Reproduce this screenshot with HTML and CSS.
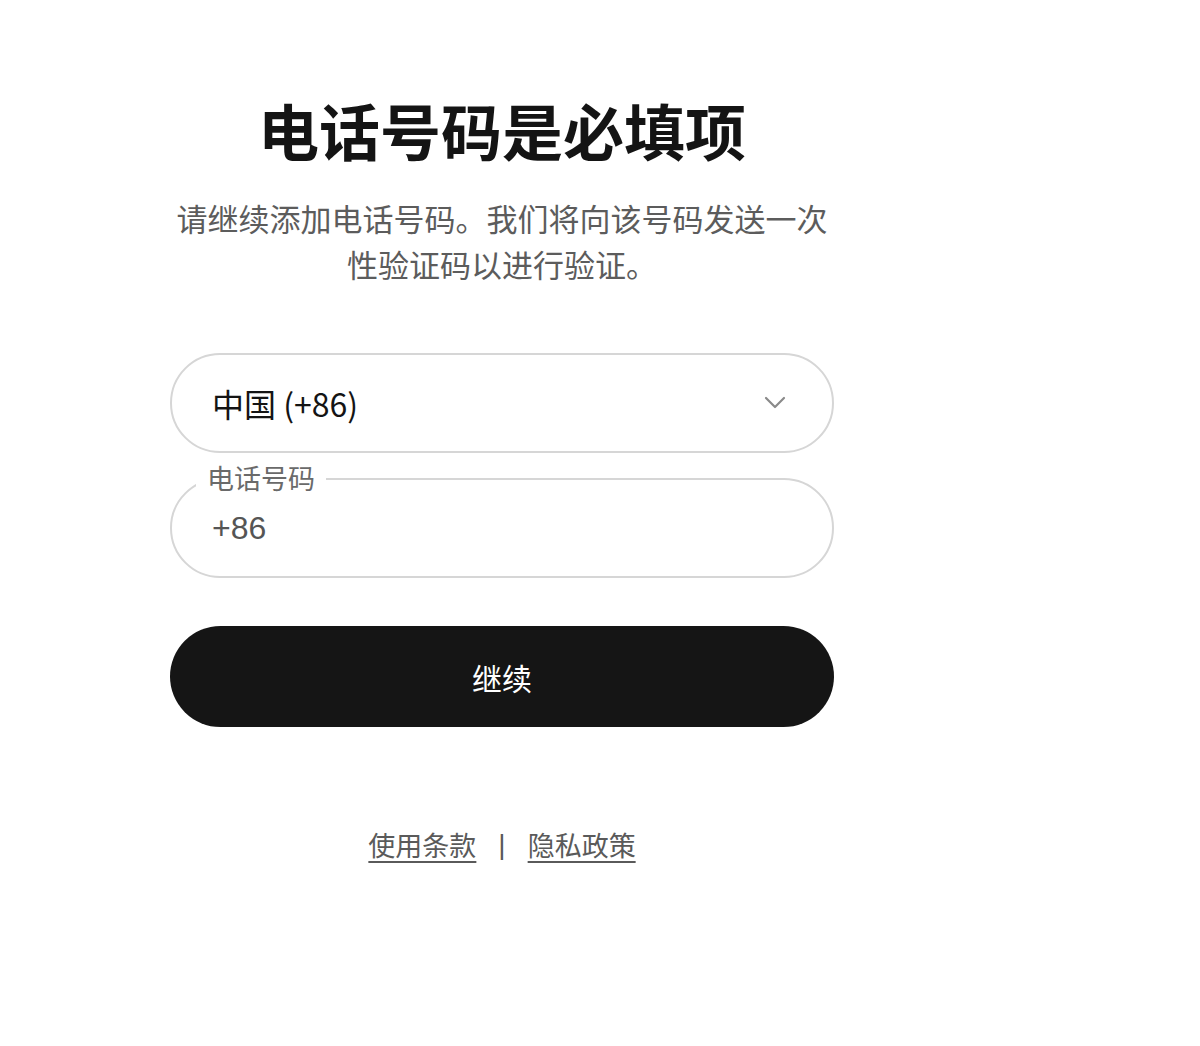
FILE: index.html
```html
<!DOCTYPE html>
<html lang="zh-CN">
<head>
<meta charset="utf-8">
<title>电话号码是必填项</title>
<link rel="stylesheet" href="styles.css">
</head>
<body>
<main class="page">
  <section class="card">
    <h1 class="title">电话号码是必填项</h1>
    <p class="subtitle">请继续添加电话号码。我们将向该号码发送一次性验证码以进行验证。</p>
    <form class="form">
      <div class="select">
        <span class="select-value">中国 (+86)</span>
        <svg class="chevron" width="22" height="14" viewBox="0 0 22 14"><path d="M2 2 L11 11 L20 2" fill="none" stroke="#8a8a8a" stroke-width="2.2" stroke-linecap="round" stroke-linejoin="round"/></svg>
      </div>
      <div class="field">
        <span class="field-label">电话号码</span>
        <span class="field-value">+86</span>
      </div>
      <button type="button" class="btn">继续</button>
    </form>
    <nav class="footer">
      <a class="link" href="#">使用条款</a>
      <span class="sep">|</span>
      <a class="link" href="#">隐私政策</a>
    </nav>
  </section>
</main>
</body>
</html>
```

FILE: styles.css
```css
html, body {
  margin: 0;
  padding: 0;
  background: #ffffff;
}
body {
  font-family: "Noto Sans CJK SC", "Noto Sans", sans-serif;
  color: #111111;
}
.page {
  padding: 88px 0 0 170px;
}
.card {
  width: 664px;
  display: flex;
  flex-direction: column;
  align-items: stretch;
}
.title {
  margin: 0;
  font-size: 61px;
  line-height: 84px;
  font-weight: 700;
  text-align: center;
  color: #141414;
}
.subtitle {
  margin: 23px 0 0;
  font-size: 31px;
  line-height: 46px;
  text-align: center;
  color: #5c5c5c;
}
.form {
  margin-top: 66px;
  display: flex;
  flex-direction: column;
}
.select {
  box-sizing: border-box;
  height: 100px;
  border: 2px solid #d6d6d6;
  border-radius: 50px;
  display: flex;
  align-items: center;
  justify-content: space-between;
  padding: 0 46px 0 40px;
}
.select-value {
  font-size: 32px;
  color: #141414;
}
.chevron {
  display: block;
}
.field {
  position: relative;
  box-sizing: border-box;
  margin-top: 25px;
  height: 100px;
  border: 2px solid #d6d6d6;
  border-radius: 50px;
  display: flex;
  align-items: center;
  padding: 0 40px;
}
.field-label {
  position: absolute;
  left: 24px;
  top: -17px;
  padding: 0 11px;
  background: #ffffff;
  font-size: 27px;
  line-height: 30px;
  color: #6a6a6a;
}
.field-value {
  font-family: "Liberation Sans", "Noto Sans CJK SC", sans-serif;
  font-size: 32px;
  color: #555555;
}
.btn {
  margin-top: 48px;
  height: 101px;
  border: none;
  border-radius: 51px;
  background: #151515;
  color: #ffffff;
  font-family: "Noto Sans CJK SC", sans-serif;
  font-size: 30px;
  cursor: pointer;
}
.footer {
  margin-top: 98px;
  display: flex;
  justify-content: center;
  align-items: center;
  gap: 22px;
  font-size: 27px;
}
.link {
  color: #5a5a5a;
  text-decoration: underline;
  text-underline-offset: 5px;
  text-decoration-thickness: 1.5px;
}
.sep {
  color: #5a5a5a;
  font-family: "Liberation Sans", sans-serif;
  font-size: 28px;
}
```
